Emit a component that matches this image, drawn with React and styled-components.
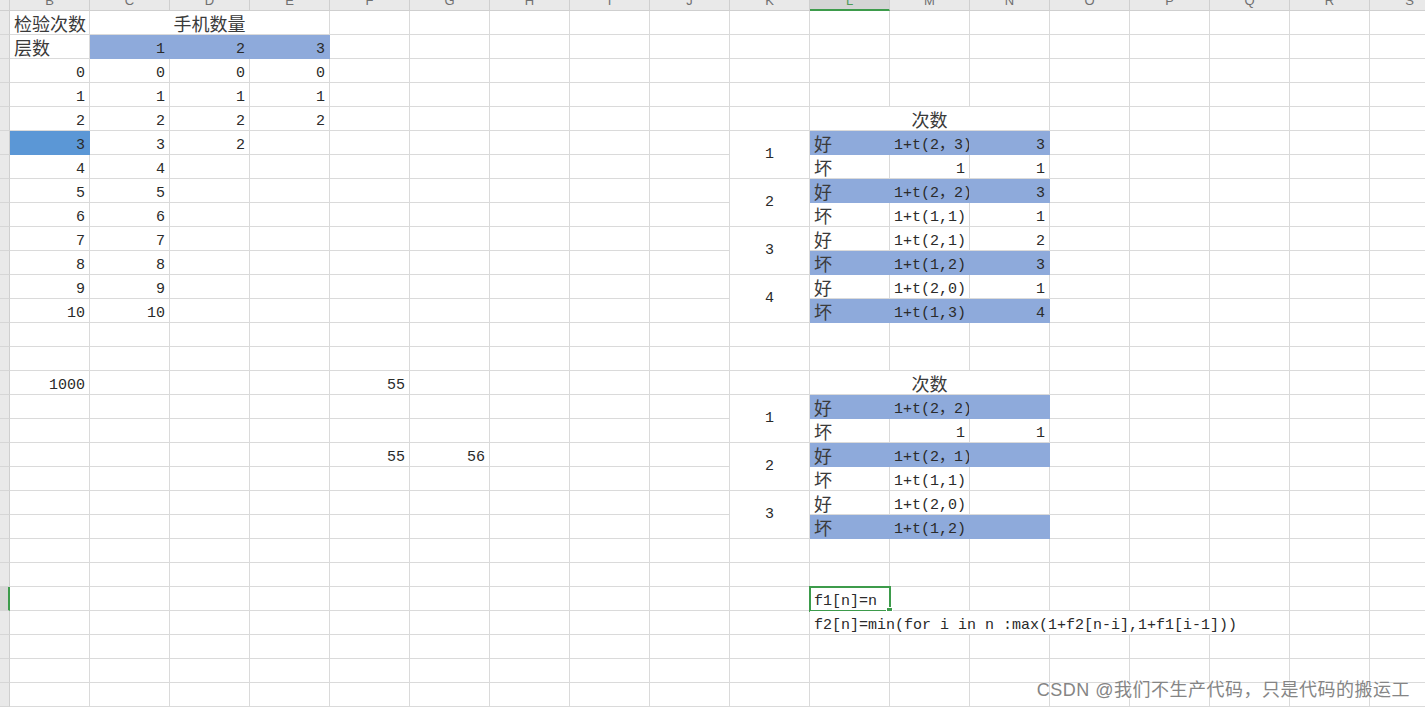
import React from 'react';
import styled, {createGlobalStyle} from 'styled-components';

const GlobalStyle = createGlobalStyle`
  html, body {
    margin: 0;
    padding: 0;
    background: #fff;
    overflow: hidden;
  }
  * { box-sizing: border-box; }
`

const COLS = 'BCDEFGHIJKLMNOPQRS'.split('')
const ROWS = 29
const BLUE = '#8eaadb'
const PICKED = '#5b97d6'
const GREEN = '#3d9b4b'
const ACTIVE = {r: 25, c: 'L'}

const Sheet = styled.div`
  position: relative;
  display: grid;
  grid-template-columns: 10px repeat(18, 80px);
  grid-template-rows: 11px repeat(${ROWS}, 24px);
  width: 1425px;
  height: 708px;
  overflow: hidden;
  background: #fff;
`

const Corner = styled.div`
  grid-column: 1;
  grid-row: 1;
  background: #e9e9e9;
  border-right: 1px solid #cfcfcf;
  border-bottom: 1px solid #cfcfcf;
`

const ColHead = styled.div`
  grid-row: 1;
  grid-column: ${p => p.$col};
  display: flex;
  justify-content: center;
  align-items: flex-start;
  overflow: hidden;
  background: ${p => p.$active ? '#d5d5d5' : '#e9e9e9'};
  border-right: 1px solid #cfcfcf;
  border-bottom: ${p => p.$active ? `2px solid ${GREEN}` : '1px solid #cfcfcf'};
  color: ${p => p.$active ? '#4f9a59' : '#707070'};
  font-family: "Liberation Sans", Arial, sans-serif;
  font-size: 13px;
  line-height: 13px;

  span { margin-top: -6px; }
`

const RowHead = styled.div`
  grid-column: 1;
  grid-row: ${p => p.$row};
  background: ${p => p.$active ? '#d6d6d6' : '#e9e9e9'};
  border-right: ${p => p.$active ? `2px solid ${GREEN}` : '1px solid #cfcfcf'};
  border-bottom: 1px solid #d6d6d6;
`

const justify = {left: 'flex-start', right: 'flex-end', center: 'center'}

const Cell = styled.div`
  grid-column: ${p => p.$col} / span ${p => p.$cs};
  grid-row: ${p => p.$row} / span ${p => p.$rs};
  position: relative;
  display: flex;
  align-items: ${p => p.$rs > 1 ? 'center' : 'flex-end'};
  justify-content: ${p => justify[p.$align]};
  padding: 0 4px 0 4px;
  background: ${p => p.$fill || '#fff'};
  border-right: 1px solid ${p => p.$fill || '#dadada'};
  border-bottom: 1px solid ${p => p.$fill || '#dadada'};
  color: ${p => p.$cjk ? '#3a3a3a' : '#2a2a2a'};
  font-family: ${p => p.$cjk
    ? '"Noto Sans CJK SC", sans-serif'
    : '"Liberation Mono", "Noto Sans CJK SC", monospace'};
  font-size: ${p => p.$cjk ? '18px' : '15px'};
  line-height: ${p => p.$cjk ? '22px' : '16px'};
  white-space: nowrap;
  overflow: ${p => p.$spill ? 'visible' : 'hidden'};
  z-index: ${p => p.$spill ? 2 : 0};
`

const Selection = styled.div`
  position: absolute;
  top: -1px;
  left: -1px;
  right: -2px;
  bottom: -2px;
  border: 2px solid ${GREEN};
  pointer-events: none;

  &::after {
    content: '';
    position: absolute;
    right: -4px;
    bottom: -4px;
    width: 5px;
    height: 5px;
    background: ${GREEN};
    border: 1px solid #fff;
  }
`

const Watermark = styled.div`
  position: absolute;
  right: 15px;
  bottom: 9px;
  z-index: 5;
  font-family: "Liberation Sans", "Noto Sans CJK SC", sans-serif;
  font-size: 18px;
  line-height: 18px;
  letter-spacing: 0.5px;
  color: #858585;
  text-shadow: 0 0 2px #fff;
  white-space: nowrap;
`

// ---- sheet data ----
const cells = [
  {r: 1, c: 'B', v: '检验次数', cjk: true},
  {r: 1, c: 'C', cs: 3, v: '手机数量', cjk: true, align: 'center'},
  {r: 2, c: 'B', v: '层数', cjk: true},
  {r: 2, c: 'C', v: 1, fill: BLUE},
  {r: 2, c: 'D', v: 2, fill: BLUE},
  {r: 2, c: 'E', v: 3, fill: BLUE},
]

for (let i = 0; i <= 10; i++) {
  cells.push({r: i + 3, c: 'B', v: i, fill: i === 3 ? PICKED : null})
  cells.push({r: i + 3, c: 'C', v: i})
}
;[0, 1, 2, 2].forEach((v, i) => cells.push({r: i + 3, c: 'D', v}))
;[0, 1, 2].forEach((v, i) => cells.push({r: i + 3, c: 'E', v}))

cells.push({r: 16, c: 'B', v: 1000})
cells.push({r: 16, c: 'F', v: 55})
cells.push({r: 19, c: 'F', v: 55})
cells.push({r: 19, c: 'G', v: 56})

const addTable = (head, rows) => {
  cells.push({r: head, c: 'L', cs: 3, v: '次数', cjk: true, align: 'center'})
  rows.forEach(([label, fill, m, n], i) => {
    const r = head + 1 + i
    if (i % 2 === 0) cells.push({r, c: 'K', rs: 2, v: i / 2 + 1, align: 'center'})
    cells.push({r, c: 'L', v: label, cjk: true, fill, align: 'left'})
    cells.push({r, c: 'M', v: m, fill})
    cells.push({r, c: 'N', v: n, fill})
  })
}

addTable(5, [
  ['好', BLUE, '1+t(2，3)', 3],
  ['坏', null, 1, 1],
  ['好', BLUE, '1+t(2，2)', 3],
  ['坏', null, '1+t(1,1)', 1],
  ['好', null, '1+t(2,1)', 2],
  ['坏', BLUE, '1+t(1,2)', 3],
  ['好', null, '1+t(2,0)', 1],
  ['坏', BLUE, '1+t(1,3)', 4],
])

addTable(16, [
  ['好', BLUE, '1+t(2，2)', null],
  ['坏', null, 1, 1],
  ['好', BLUE, '1+t(2，1)', null],
  ['坏', null, '1+t(1,1)', null],
  ['好', null, '1+t(2,0)', null],
  ['坏', BLUE, '1+t(1,2)', null],
])

cells.push({r: 25, c: 'L', v: 'f1[n]=n', spill: true})
cells.push({r: 26, c: 'L', cs: 6, v: 'f2[n]=min(for i in n :max(1+f2[n-i],1+f1[i-1]))', spill: true})

const byKey = {}
const covered = new Set()
cells.forEach(cell => {
  const ci = COLS.indexOf(cell.c)
  byKey[`${cell.r}:${ci}`] = cell
  for (let dr = 0; dr < (cell.rs || 1); dr++)
    for (let dc = 0; dc < (cell.cs || 1); dc++)
      if (dr || dc) covered.add(`${cell.r + dr}:${ci + dc}`)
})

const App = () => {
  const grid = []
  for (let r = 1; r <= ROWS; r++) {
    grid.push(<RowHead key={`h${r}`} $row={r + 1} $active={r === ACTIVE.r}/>)
    COLS.forEach((col, ci) => {
      const key = `${r}:${ci}`
      if (covered.has(key)) return
      const cell = byKey[key] || {}
      const numeric = typeof cell.v === 'number'
      const isActive = r === ACTIVE.r && col === ACTIVE.c
      grid.push(
        <Cell key={key}
              $row={r + 1}
              $col={ci + 2}
              $rs={cell.rs || 1}
              $cs={cell.cs || 1}
              $fill={cell.fill}
              $cjk={cell.cjk}
              $spill={cell.spill}
              $align={cell.align || (numeric ? 'right' : 'left')}>
            {cell.v}
            {isActive && <Selection/>}
        </Cell>
      )
    })
  }

  return (
    <>
      <GlobalStyle/>
      <Sheet>
        <Corner/>
        {COLS.map((col, i) => (
          <ColHead key={col} $col={i + 2} $active={col === ACTIVE.c}>
            <span>{col}</span>
          </ColHead>
        ))}
        {grid}
        <Watermark>CSDN @我们不生产代码，只是代码的搬运工</Watermark>
      </Sheet>
    </>
  )
}

export default App;
